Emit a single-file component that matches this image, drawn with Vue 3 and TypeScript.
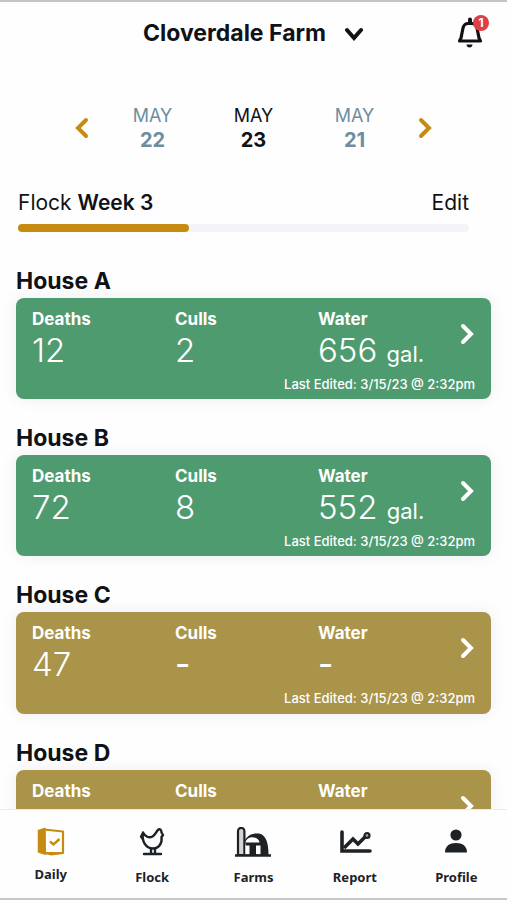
<script setup lang="ts">
interface House {
  name: string
  deaths: string
  culls: string
  water: string
  unit?: string
  complete: boolean
}

interface Day {
  month: string
  day: number
  current?: boolean
}

const days: Day[] = [
  { month: 'MAY', day: 22 },
  { month: 'MAY', day: 23, current: true },
  { month: 'MAY', day: 21 },
]

const weekProgress = 38

const edited = '3/15/23 @ 2:32pm'

const houses: House[] = [
  { name: 'House A', deaths: '12', culls: '2', water: '656', unit: 'gal.', complete: true },
  { name: 'House B', deaths: '72', culls: '8', water: '552', unit: 'gal.', complete: true },
  { name: 'House C', deaths: '47', culls: '-', water: '-', complete: false },
  { name: 'House D', deaths: '-', culls: '-', water: '-', complete: false },
]
</script>

<template>
  <div class="app">
    <header class="topbar">
      <button class="farm" type="button">
        <span>Cloverdale Farm</span>
        <svg width="20" height="16" viewBox="0 0 20 16" aria-hidden="true">
          <path d="M3 5l7 8 7-8" fill="none" stroke="currentColor" stroke-width="4" stroke-linecap="round" stroke-linejoin="miter" />
        </svg>
      </button>
      <button class="bell" type="button" aria-label="Notifications">
        <svg width="26" height="32" viewBox="0 0 26 32" aria-hidden="true">
          <path d="M13 2.500v3" stroke="currentColor" stroke-width="4" stroke-linecap="round" />
          <path d="M2.500 24H23.500L22 21 20 11C19.200 8 17.500 6.500 15 6.500H11C8.500 6.500 6.800 8 6 11L4 21Z" fill="none" stroke="currentColor" stroke-width="3.200" stroke-linejoin="round" />
          <path d="M9.500 27.500h6c0 4-6 4-6 0z" fill="currentColor" />
        </svg>
        <span class="badge">1</span>
      </button>
    </header>

    <main class="content">
      <nav class="dates" aria-label="Day">
        <button class="arrow" type="button" aria-label="Previous day">
          <svg width="14" height="22" viewBox="0 0 14 22" aria-hidden="true"><path d="M11 3L3 11l8 8" /></svg>
        </button>
        <button v-for="d in days" :key="d.day" type="button" class="day" :class="{ current: d.current }">
          <span>{{ d.month }}</span>
          <strong>{{ d.day }}</strong>
        </button>
        <button class="arrow" type="button" aria-label="Next day">
          <svg width="14" height="22" viewBox="0 0 14 22" aria-hidden="true"><path d="M3 3l8 8-8 8" /></svg>
        </button>
      </nav>

      <section class="week">
        <div class="week-row">
          <span>Flock <b>Week 3</b></span>
          <button type="button">Edit</button>
        </div>
        <div class="track"><div class="fill" :style="{ width: weekProgress + '%' }"></div></div>
      </section>

      <section v-for="h in houses" :key="h.name" class="house">
        <h2>{{ h.name }}</h2>
        <a href="#" class="card" :class="{ pending: !h.complete }">
          <dl class="stats">
            <div><dt>Deaths</dt><dd :class="{ empty: h.deaths === '-' }">{{ h.deaths }}</dd></div>
            <div><dt>Culls</dt><dd :class="{ empty: h.culls === '-' }">{{ h.culls }}</dd></div>
            <div><dt>Water</dt><dd :class="{ empty: h.water === '-' }">{{ h.water }} <small v-if="h.unit">{{ h.unit }}</small></dd></div>
          </dl>
          <svg class="go" width="16" height="24" viewBox="0 0 16 24" aria-hidden="true"><path d="M4 4l8 8-8 8" /></svg>
          <p class="edited">Last Edited: {{ edited }}</p>
        </a>
      </section>
    </main>

    <nav class="tabs" aria-label="Main">
      <a href="#" class="active">
        <svg width="28" height="30" viewBox="0 0 28 30" aria-hidden="true">
          <path d="M1.500 3.500L8 1.500V27L1.500 25Z" fill="currentColor" stroke="currentColor" stroke-width="1.500" stroke-linejoin="round" />
          <path d="M7 2.500L26 4.500V26L8 26.500Z" fill="none" stroke="currentColor" stroke-width="2.200" stroke-linejoin="round" />
          <path d="M3 25L26 25V27L14 28.500Z" fill="currentColor" />
          <path d="M13 14.500l3.500 3 6-5.500" fill="none" stroke="currentColor" stroke-width="2.400" />
        </svg>
        <span>Daily</span>
      </a>
      <a href="#">
        <svg width="28" height="30" viewBox="0 0 28 30" aria-hidden="true">
          <g fill="none" stroke="currentColor" stroke-width="2.400" stroke-linejoin="round" stroke-linecap="round">
            <path d="M5 5.500C7 9.500 11 11.500 14.500 9.500 18 7.500 18 4.500 20.500 2.500 22.500 1.800 23.500 3.500 23.500 5.500L25 8 23.500 10C24.500 16 21 21.500 15 21.500 7.500 21.500 3.500 14 5 5.500Z" />
            <path d="M4.500 7L3 9.500l1.500 2M13 22v4M17 22v4M6 27h17" />
          </g>
        </svg>
        <span>Flock</span>
      </a>
      <a href="#">
        <svg width="38" height="30" viewBox="0 0 38 30" aria-hidden="true">
          <path d="M12 28V12C15 7 20 6 25 6.500 32 8 34.500 16 34.500 28Z" fill="currentColor" />
          <path d="M4 28V4a3.200 3.200 0 0 1 6.400 0V28Z" fill="#d4d4d4" stroke="currentColor" stroke-width="2.200" />
          <path d="M10.500 16C12.500 7.500 24 7.500 26.500 16Z" fill="#fff" stroke="currentColor" stroke-width="1.200" />
          <path d="M11.500 18.500h4v9h-4zM22 18.500h4.500v9H22z" fill="#fff" />
          <path d="M1 28.500h36" stroke="currentColor" stroke-width="2.400" />
        </svg>
        <span>Farms</span>
      </a>
      <a href="#">
        <svg width="34" height="30" viewBox="0 0 34 30" aria-hidden="true">
          <path d="M4 5V24H32" fill="none" stroke="currentColor" stroke-width="3.600" stroke-linecap="round" />
          <path d="M6 21l9-9 5 5 7-7" fill="none" stroke="currentColor" stroke-width="3.600" />
          <circle cx="29" cy="8.500" r="2.500" fill="#999" stroke="currentColor" stroke-width="2.200" />
        </svg>
        <span>Report</span>
      </a>
      <a href="#">
        <svg width="24" height="30" viewBox="0 0 24 30" aria-hidden="true">
          <circle cx="12" cy="8" r="5.600" fill="currentColor" />
          <path d="M1 25.500C1 19 5.500 16 12 16s11 3 11 9.500Z" fill="currentColor" />
        </svg>
        <span>Profile</span>
      </a>
    </nav>
  </div>
</template>

<style>
body {
  margin: 0;
  background: #fefefe;
}
</style>

<style scoped>
.app {
  box-sizing: border-box;
  display: flex;
  flex-direction: column;
  height: 100vh;
  border-top: 2px solid #c4c4c4;
  border-bottom: 2px solid #c8c8c8;
  font-family: Inter, 'Liberation Sans', sans-serif;
  color: #101216;
}

button {
  padding: 0;
  border: 0;
  background: none;
  color: inherit;
  font: inherit;
  cursor: pointer;
}

svg {
  display: block;
}

.topbar {
  flex: none;
  display: grid;
  grid-template-columns: 1fr auto 1fr;
  align-items: center;
  height: 62px;
  padding: 0 24px;
}

.farm {
  grid-column: 2;
  display: flex;
  align-items: center;
  gap: 18px;
  font-size: 23px;
  font-weight: 700;
}

.bell {
  position: relative;
  justify-self: end;
}

.badge {
  position: absolute;
  top: -2px;
  right: -6px;
  width: 16px;
  height: 16px;
  border-radius: 50%;
  background: #dc3f45;
  color: #fff;
  font-size: 12px;
  font-weight: 700;
  line-height: 16px;
}

.content {
  flex: 1;
  min-height: 0;
  overflow-y: auto;
  padding: 0 16px;
  scrollbar-width: none;
}

.dates {
  display: flex;
  justify-content: center;
  align-items: center;
  padding-top: 40px;
}

.day {
  display: flex;
  flex-direction: column;
  width: 101px;
  color: #6d8da0;
  font-size: 18px;
  line-height: 24px;
}

.day strong {
  font-size: 20px;
}

.day.current {
  color: #101216;
}

.arrow {
  padding: 0 13px;
}

.arrow path,
.go path {
  fill: none;
  stroke: #c58c11;
  stroke-width: 4;
  stroke-linecap: round;
}

.week {
  padding: 39px 22px 0 2px;
}

.week-row {
  display: flex;
  justify-content: space-between;
  font-size: 21px;
  line-height: 24px;
}

.week-row b {
  font-weight: 600;
}

.track {
  height: 8px;
  margin-top: 9px;
  border-radius: 4px;
  background: #f3f4f8;
}

.fill {
  height: 100%;
  border-radius: 4px;
  background: #c58c11;
}

.house {
  padding-top: 27px;
}

.week + .house {
  padding-top: 37px;
}

h2 {
  margin: 0 0 5px;
  font-size: 23px;
  font-weight: 700;
  line-height: 24px;
}

.card {
  position: relative;
  display: block;
  padding: 11px 16px 5px;
  border-radius: 8px;
  background: #4f9b70;
  box-shadow: 0 0 16px rgb(30 40 90 / 8%);
  color: #fff;
  text-decoration: none;
}

.card.pending {
  padding-bottom: 6px;
  background: #a99449;
}

.stats {
  display: grid;
  grid-template-columns: repeat(3, 1fr);
  margin: 0 14px 4px 0;
}

dt {
  font-size: 17px;
  font-weight: 700;
  line-height: 21px;
}

dd {
  margin: 0;
  font-size: 33px;
  font-weight: 300;
  line-height: 40px;
  white-space: nowrap;
}

dd.empty {
  font-weight: 500;
}

small {
  font-size: 22px;
  font-weight: 400;
  line-height: 1;
}

.go {
  position: absolute;
  top: 24px;
  right: 16px;
}

.go path {
  stroke: #fff;
}

.edited {
  margin: 0;
  font-size: 13px;
  font-weight: 500;
  line-height: 20px;
  text-align: right;
}

.tabs {
  flex: none;
  display: grid;
  grid-template-columns: repeat(5, 1fr);
  height: 88px;
  border-top: 1px solid #fce9c8;
  background: #fefefe;
}

.tabs a {
  display: flex;
  flex-direction: column;
  align-items: center;
  gap: 10px;
  padding-top: 17px;
  color: #1d2226;
  font-family: 'Noto Sans', 'Open Sans', sans-serif;
  font-size: 13px;
  font-weight: 700;
  line-height: 20px;
  text-decoration: none;
}

.tabs .active {
  gap: 7px;
}

.tabs .active svg {
  color: #c58c11;
}
</style>
